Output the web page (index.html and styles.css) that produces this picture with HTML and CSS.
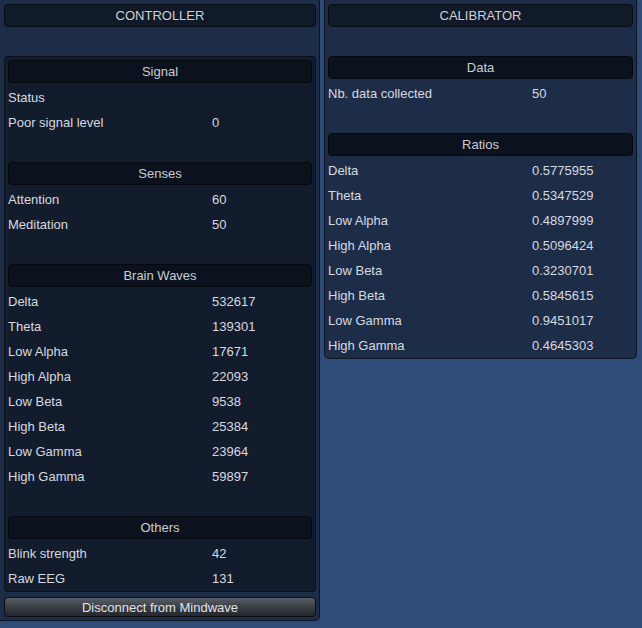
FILE: index.html
```html
<!DOCTYPE html>
<html>
<head>
<meta charset="utf-8">
<link rel="stylesheet" href="styles.css">
</head>
<body>
<div class="app">
  <section class="panel controller">
    <div class="title">CONTROLLER</div>
    <div class="group">
      <div class="hdr">Signal</div>
      <div class="row"><span>Status</span><span></span></div>
      <div class="row"><span>Poor signal level</span><span>0</span></div>
      <div class="hdr sec">Senses</div>
      <div class="row"><span>Attention</span><span>60</span></div>
      <div class="row"><span>Meditation</span><span>50</span></div>
      <div class="hdr sec">Brain Waves</div>
      <div class="row"><span>Delta</span><span>532617</span></div>
      <div class="row"><span>Theta</span><span>139301</span></div>
      <div class="row"><span>Low Alpha</span><span>17671</span></div>
      <div class="row"><span>High Alpha</span><span>22093</span></div>
      <div class="row"><span>Low Beta</span><span>9538</span></div>
      <div class="row"><span>High Beta</span><span>25384</span></div>
      <div class="row"><span>Low Gamma</span><span>23964</span></div>
      <div class="row"><span>High Gamma</span><span>59897</span></div>
      <div class="hdr sec">Others</div>
      <div class="row"><span>Blink strength</span><span>42</span></div>
      <div class="row"><span>Raw EEG</span><span>131</span></div>
    </div>
    <button class="btn">Disconnect from Mindwave</button>
  </section>
  <section class="panel calibrator">
    <div class="title">CALIBRATOR</div>
    <div class="hdr first">Data</div>
    <div class="row"><span>Nb. data collected</span><span>50</span></div>
    <div class="hdr sec">Ratios</div>
    <div class="row"><span>Delta</span><span>0.5775955</span></div>
    <div class="row"><span>Theta</span><span>0.5347529</span></div>
    <div class="row"><span>Low Alpha</span><span>0.4897999</span></div>
    <div class="row"><span>High Alpha</span><span>0.5096424</span></div>
    <div class="row"><span>Low Beta</span><span>0.3230701</span></div>
    <div class="row"><span>High Beta</span><span>0.5845615</span></div>
    <div class="row"><span>Low Gamma</span><span>0.9451017</span></div>
    <div class="row"><span>High Gamma</span><span>0.4645303</span></div>
  </section>
</div>
</body>
</html>
```
FILE: styles.css
```css
html, body {
  margin: 0;
  padding: 0;
}
body {
  background: #2f4c78;
  font-family: "Liberation Sans", Arial, sans-serif;
  font-size: 13px;
  color: #d6dae0;
  width: 642px;
  height: 628px;
  overflow: hidden;
}
.app {
  display: flex;
  align-items: flex-start;
  gap: 4px;
}
.panel {
  box-sizing: border-box;
  background: #1e2d47;
  border: 1px solid #0c1524;
  border-top: none;
  display: flex;
  flex-direction: column;
}
.controller {
  width: 320px;
  border-left: none;
  border-radius: 0 0 5px 0;
  padding: 4px 3px 3px 4px;
}
.calibrator {
  width: 313px;
  border-radius: 0 0 5px 5px;
  padding: 4px 3px 0 3px;
}
.title {
  height: 23px;
  line-height: 21px;
  text-align: center;
  background: #111a29;
  border: 1px solid #070c14;
  box-sizing: border-box;
  border-radius: 4px;
  color: #cdd1d7;
}
.group {
  margin-top: 29px;
  background: #131c2c;
  border: 1px solid #0a1019;
  border-radius: 4px;
  padding: 3px 3px 0 3px;
}
.hdr {
  height: 23px;
  line-height: 21px;
  box-sizing: border-box;
  text-align: center;
  background: #0c121d;
  border: 1px solid #05090f;
  border-radius: 4px;
  color: #c9cdd3;
  margin-bottom: 2px;
}
.hdr.first {
  margin-top: 29px;
}
.hdr.sec {
  margin-top: 27px;
}
.row {
  display: grid;
  grid-template-columns: 204px 1fr;
  height: 25px;
  line-height: 25px;
  white-space: nowrap;
}
.btn {
  margin-top: 5px;
  height: 20px;
  padding: 0;
  font: inherit;
  color: #e2e4e8;
  background: linear-gradient(#5a5f68, #3c4047 45%, #24272d);
  border: 1px solid #0a0d12;
  border-radius: 4px;
  line-height: 19px;
  text-align: center;
}
```
